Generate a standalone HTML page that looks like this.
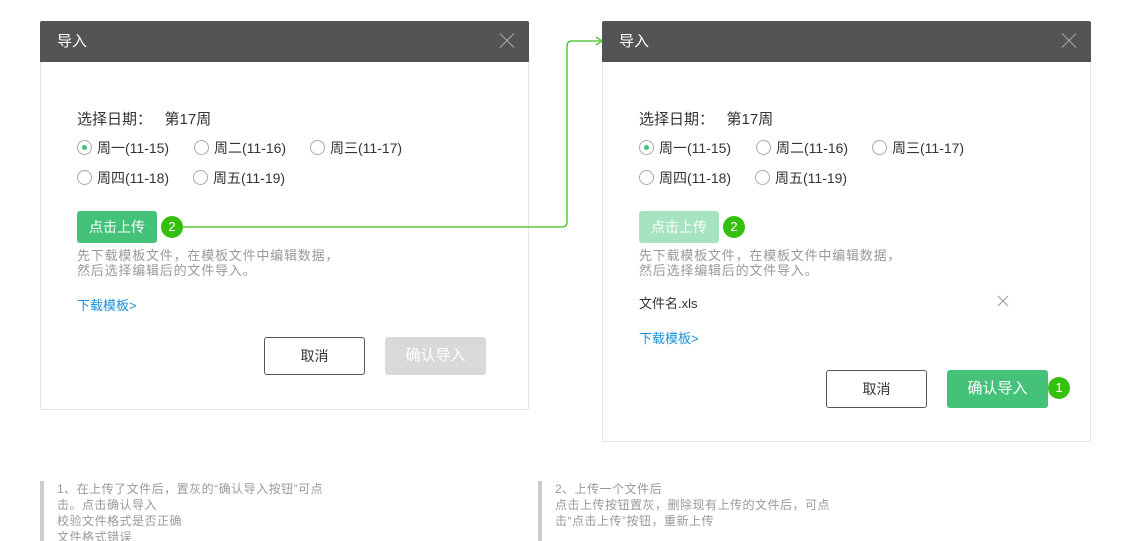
<!DOCTYPE html>
<html><head><meta charset="utf-8"><style>
*{margin:0;padding:0;box-sizing:border-box}
body{width:1137px;height:532px;overflow:hidden;background:#fff;position:relative;font-family:"Liberation Sans","Noto Sans CJK SC",sans-serif;color:#333}
.a{position:absolute;white-space:nowrap}
.dlg{position:absolute;background:#fff;border:1px solid #e3e3e3;border-radius:2px}
.hd{position:absolute;left:-1px;right:-1px;top:-1px;height:41px;background:#545454;color:#fff;font-size:15px;line-height:41px;padding-left:17px;border-radius:2px 2px 0 0}
.x{position:absolute;right:14px;top:12px;width:16px;height:16px}
.x:before,.x:after{content:"";position:absolute;left:-2px;top:7px;width:20px;height:1px;background:#aaa;transform:rotate(45deg)}
.x:after{transform:rotate(-45deg)}
.r{position:absolute;font-size:14px;line-height:16px;padding-left:20px;color:#333}
.r:before{content:"";position:absolute;left:0;top:0;width:13px;height:13px;border:1px solid #aaa;border-radius:50%}
.r.on:after{content:"";position:absolute;left:5px;top:5px;width:5px;height:5px;border-radius:50%;background:#45c27a}
.btn{position:absolute;text-align:center;border-radius:3px}
.help{font-size:13px;color:#999;line-height:15px;letter-spacing:0.8px}
.link{font-size:13px;color:#1a8fd8}
.badge{position:absolute;width:22px;height:22px;border-radius:50%;background:#35c010;color:#fff;font-size:13px;line-height:22px;text-align:center}
.note{position:absolute;border-left:4px solid #ccc;padding-left:13px;font-size:12px;color:#999;line-height:16px;height:60px;overflow:hidden;letter-spacing:0.5px}
</style></head><body>

<!-- left dialog -->
<div class="dlg" style="left:40px;top:21px;width:489px;height:389px">
<div class="hd">导入<span class="x"></span></div>
</div>
<div class="a" style="left:77px;top:108px;font-size:15px">选择日期：&nbsp;&nbsp;&nbsp;第17周</div>
<div class="r on" style="left:77px;top:140px">周一(11-15)</div>
<div class="r" style="left:194px;top:140px">周二(11-16)</div>
<div class="r" style="left:310px;top:140px">周三(11-17)</div>
<div class="r" style="left:77px;top:170px">周四(11-18)</div>
<div class="r" style="left:193px;top:170px">周五(11-19)</div>
<div class="btn" style="left:77px;top:211px;width:80px;height:32px;background:#45c27a;color:#fff;font-size:14px;line-height:32px">点击上传</div>
<div class="a help" style="left:77px;top:248px">先下载模板文件，在模板文件中编辑数据，<br>然后选择编辑后的文件导入。</div>
<div class="a link" style="left:77px;top:295px">下载模板&gt;</div>
<div class="btn" style="left:264px;top:337px;width:101px;height:38px;border:1px solid #555;font-size:14px;line-height:36px">取消</div>
<div class="btn" style="left:385px;top:337px;width:101px;height:38px;background:#d9d9d9;color:#fff;font-size:15px;line-height:38px">确认导入</div>

<!-- right dialog -->
<div class="dlg" style="left:602px;top:21px;width:489px;height:421px">
<div class="hd">导入<span class="x"></span></div>
</div>
<div class="a" style="left:639px;top:108px;font-size:15px">选择日期：&nbsp;&nbsp;&nbsp;第17周</div>
<div class="r on" style="left:639px;top:140px">周一(11-15)</div>
<div class="r" style="left:756px;top:140px">周二(11-16)</div>
<div class="r" style="left:872px;top:140px">周三(11-17)</div>
<div class="r" style="left:639px;top:170px">周四(11-18)</div>
<div class="r" style="left:755px;top:170px">周五(11-19)</div>
<div class="btn" style="left:639px;top:211px;width:80px;height:32px;background:#a6e3c0;color:#fff;font-size:14px;line-height:32px">点击上传</div>
<div class="a help" style="left:639px;top:248px">先下载模板文件，在模板文件中编辑数据，<br>然后选择编辑后的文件导入。</div>
<div class="a" style="left:639px;top:293px;font-size:13px">文件名.xls</div>
<svg class="a" style="left:997px;top:295px" width="12" height="12"><path d="M1 1L11 11M11 1L1 11" stroke="#999" stroke-width="1"/></svg>
<div class="a link" style="left:639px;top:328px">下载模板&gt;</div>
<div class="btn" style="left:826px;top:370px;width:101px;height:38px;border:1px solid #555;font-size:14px;line-height:36px">取消</div>
<div class="btn" style="left:947px;top:370px;width:101px;height:38px;background:#45c27a;color:#fff;font-size:15px;line-height:38px">确认导入</div>

<svg class="a" style="left:0;top:0" width="1137" height="532">
<path d="M172 227 H562 Q567 227 567 222 V46 Q567 41 572 41 H600" fill="none" stroke="#3fbf1a" stroke-width="1.3"/>
<path d="M596 37 L602 41 L596 45" fill="none" stroke="#3fbf1a" stroke-width="1.3"/>
</svg>
<div class="badge" style="left:161px;top:216px">2</div>
<div class="badge" style="left:723px;top:216px">2</div>
<div class="badge" style="left:1048px;top:377px">1</div>

<div class="note" style="left:40px;top:481px;width:330px">1、在上传了文件后，置灰的“确认导入按钮”可点<br>击。点击确认导入<br>校验文件格式是否正确<br>文件格式错误</div>
<div class="note" style="left:538px;top:481px;width:330px">2、上传一个文件后<br>点击上传按钮置灰，删除现有上传的文件后，可点<br>击“点击上传”按钮，重新上传</div>
</body></html>
